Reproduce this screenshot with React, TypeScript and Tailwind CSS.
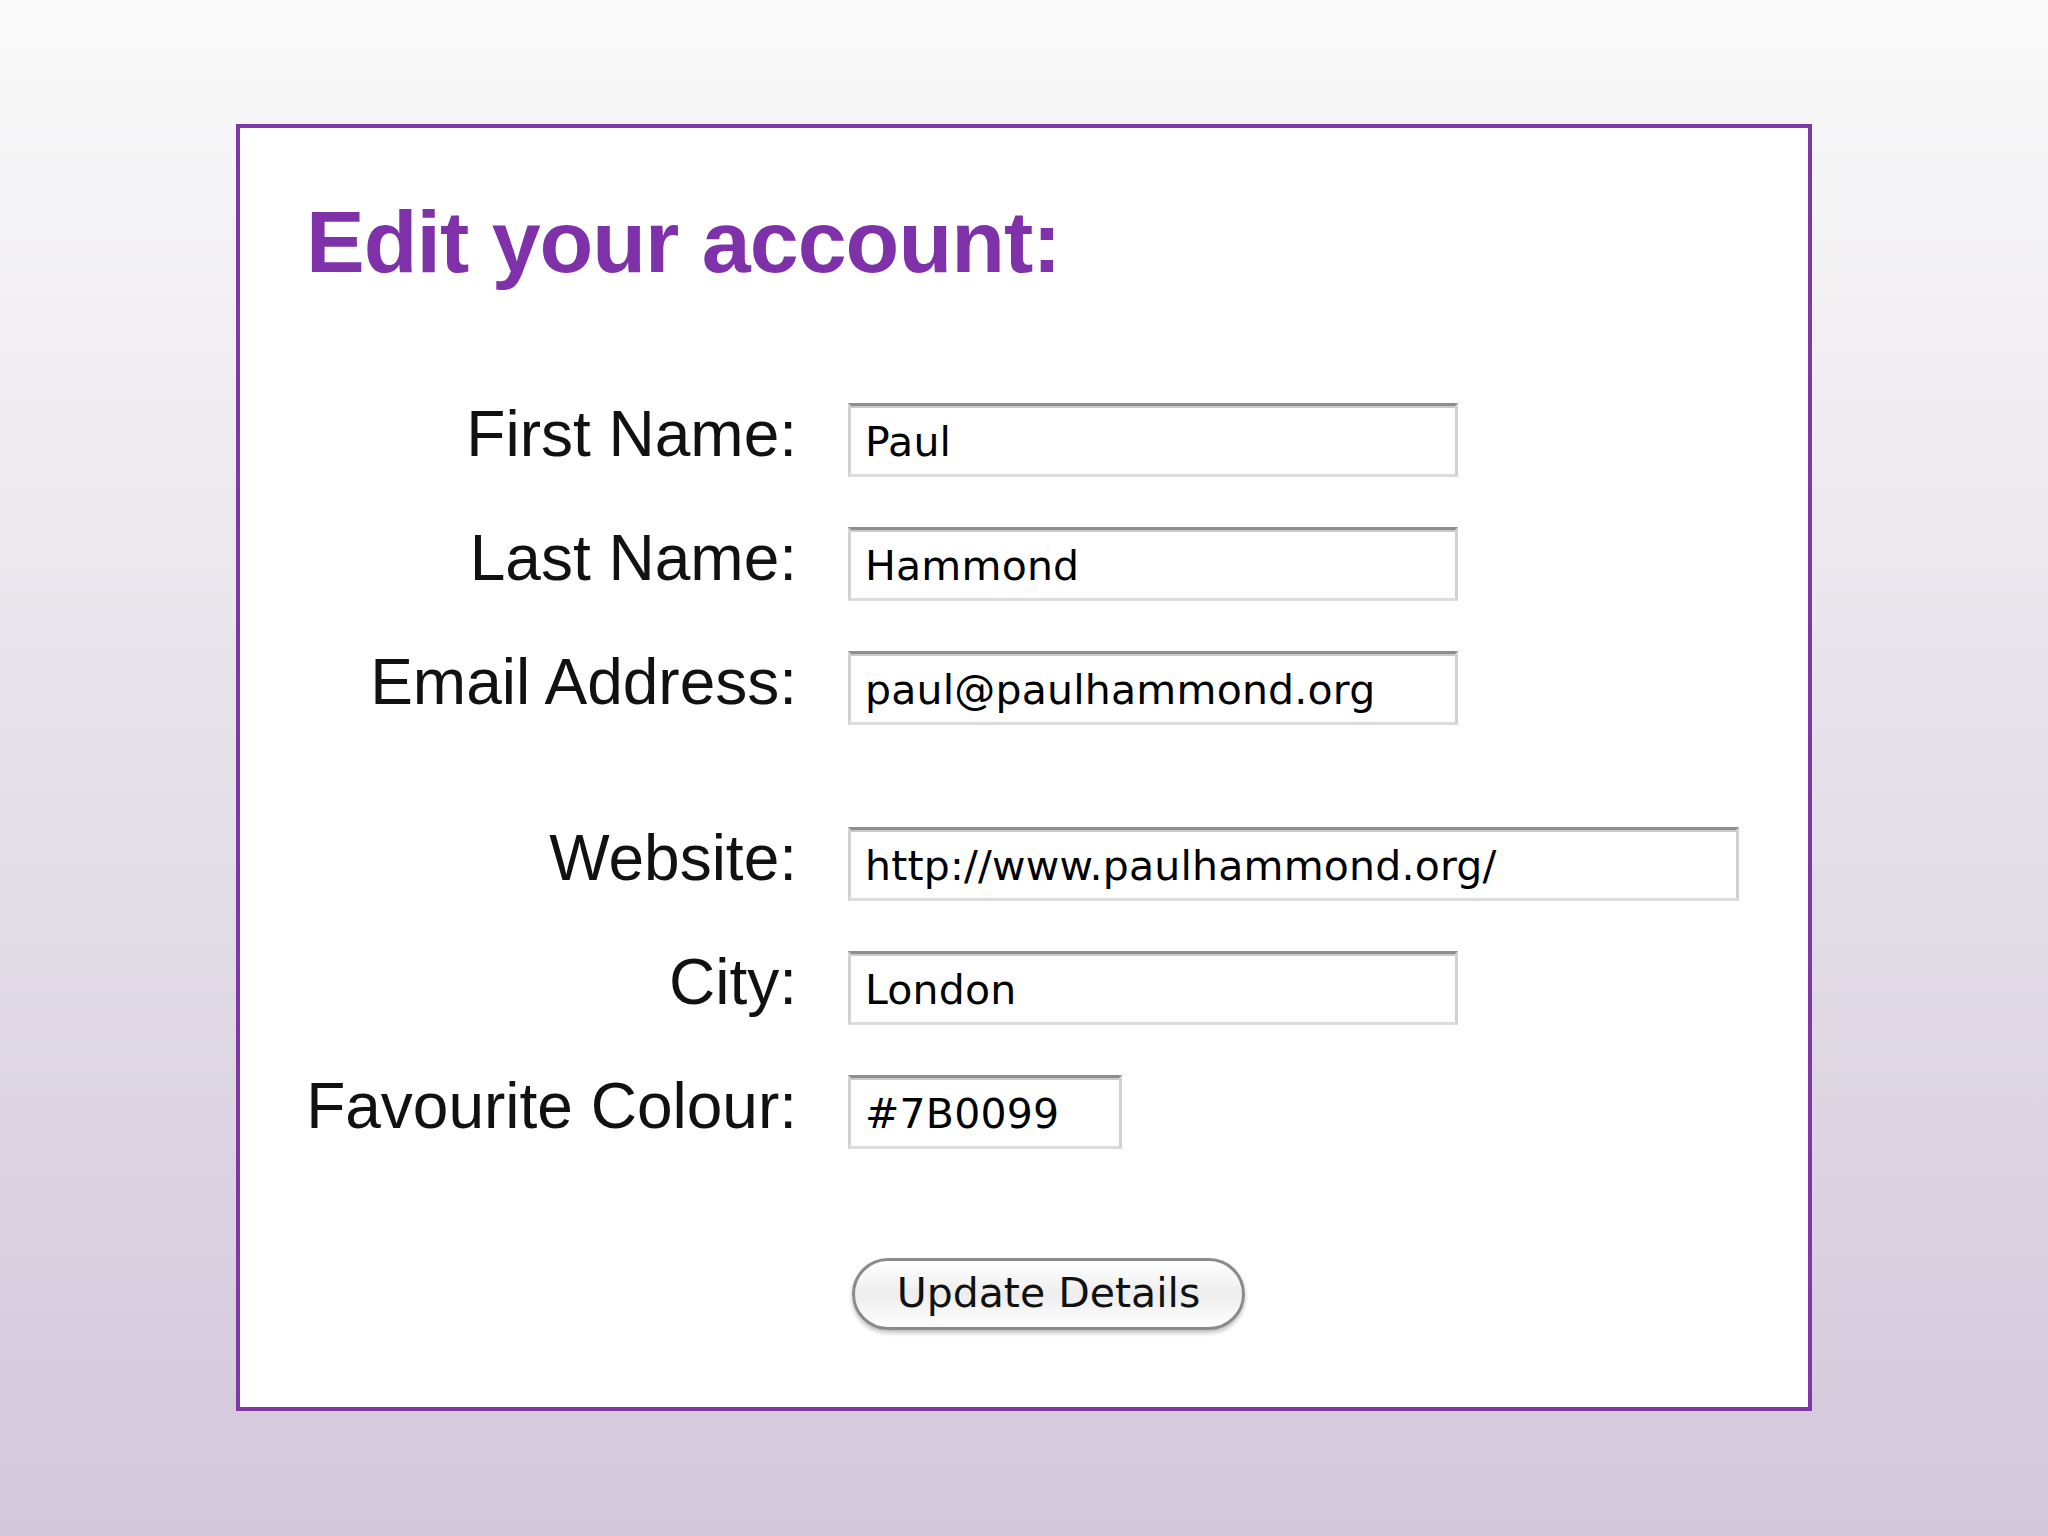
import { useState } from "react";

// account form: label column on the left, inset text fields on the right
type Field = {
  id: string;
  label: string;
  value: string;
  width: string;
  gapBefore?: boolean;
};

const fields: Field[] = [
  { id: "first", label: "First Name:", value: "Paul", width: "w-[610px]" },
  { id: "last", label: "Last Name:", value: "Hammond", width: "w-[610px]" },
  { id: "email", label: "Email Address:", value: "paul@paulhammond.org", width: "w-[610px]" },
  { id: "web", label: "Website:", value: "http://www.paulhammond.org/", width: "w-[891px]", gapBefore: true },
  { id: "city", label: "City:", value: "London", width: "w-[610px]" },
  { id: "colour", label: "Favourite Colour:", value: "#7B0099", width: "w-[274px]" },
];

export default function App() {
  const [values, setValues] = useState<Record<string, string>>(
    Object.fromEntries(fields.map((f) => [f.id, f.value]))
  );

  return (
    <div className="min-h-screen w-full bg-linear-to-b from-[#fafafa] via-[#e5e1e9] to-[#d3c7dc] pt-[124px] font-['Liberation_Sans',Arial,sans-serif]">
      <div className="mx-auto w-[1576px] border-4 border-[#8038a8] bg-white pl-[66px] pt-[70px] pb-[77px]">
        <h1 className="text-[88px] leading-none font-bold tracking-[-1px] text-[#7e31a9]">
          Edit your account:
        </h1>

        <form
          className="mt-[116px] grid grid-cols-[491px_1fr] gap-x-[51px] gap-y-[49px] items-baseline"
          onSubmit={(e) => e.preventDefault()}
        >
          {fields.map((f) => (
            <div key={f.id} className="contents">
              <label
                htmlFor={f.id}
                className={`text-right text-[64px] leading-none text-[#111] ${f.gapBefore ? "mt-[52px]" : ""}`}
              >
                {f.label}
              </label>
              <input
                id={f.id}
                value={values[f.id]}
                onChange={(e) => setValues({ ...values, [f.id]: e.target.value })}
                className={`${f.width} h-[74px] ${f.gapBefore ? "mt-[52px]" : ""} border-[3px] border-[#d2d2d2] border-t-[#8e8e8e] border-b-[#dcdcdc] bg-white px-[14px] pt-[4px] font-['DejaVu_Sans',sans-serif] text-[41px] tracking-[0.2px] text-black shadow-[inset_0_2px_0_#c9c9c9] outline-none`}
              />
            </div>
          ))}

          <div className="mt-[60px]" />
          <div className="mt-[60px]">
            <button
              type="submit"
              className="ml-[4px] h-[72px] w-[393px] rounded-full border-[3px] border-[#8a8a8a] bg-linear-to-b from-white via-[#ededed] to-white font-['DejaVu_Sans',sans-serif] text-[41px] text-[#111] shadow-[0_3px_4px_rgba(0,0,0,0.25)]"
            >
              Update Details
            </button>
          </div>
        </form>
      </div>
    </div>
  );
}
